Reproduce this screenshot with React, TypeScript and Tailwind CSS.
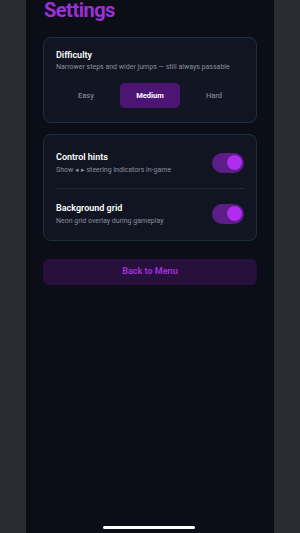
import React from "react";

function Toggle() {
  return (
    <div className="w-[32px] h-[20px] rounded-full bg-[#5b1d86] flex items-center justify-end px-[2px] shrink-0">
      <div className="w-[15px] h-[15px] rounded-full bg-[#b12bf0]" />
    </div>
  );
}

export default function App() {
  return (
    <div className="w-[300px] h-[533px] bg-[#2a2c31] flex justify-center overflow-hidden" style={{ fontFamily: "Roboto, 'Noto Sans', sans-serif" }}>
      <div className="w-[248px] h-full bg-[#0b0e17] flex flex-col px-[17px] relative">
        <h1 className="text-[20px] font-bold tracking-tight text-[#9d2fd6] leading-none mt-0 ml-[1px] h-[20px]">Settings</h1>

        <div className="mt-[17px] rounded-[8px] border border-[#1e2f3c] bg-[#111522] px-[12px] pt-[10px] pb-[14px]">
          <div className="text-[9px] font-semibold text-white leading-[14px]">Difficulty</div>
          <div className="text-[7px] text-[#8a8f9c] leading-[10px]">Narrower steps and wider jumps — still always passable</div>
          <div className="mt-[11px] grid grid-cols-3 gap-[4px] rounded-[6px] bg-[#121624]">
            <div className="h-[25px] flex items-center justify-center text-[7.5px] text-[#7d8290] font-medium">Easy</div>
            <div className="h-[25px] flex items-center justify-center text-[7.5px] text-white font-bold rounded-[5px] bg-[#4c1574]">Medium</div>
            <div className="h-[25px] flex items-center justify-center text-[7.5px] text-[#7d8290] font-medium">Hard</div>
          </div>
        </div>

        <div className="mt-[11px] rounded-[8px] border border-[#1e2f3c] bg-[#111522] px-[12px]">
          <div className="flex items-center justify-between pt-[15px] pb-[13px]">
            <div>
              <div className="text-[9px] font-semibold text-white leading-[14px]">Control hints</div>
              <div className="text-[7px] text-[#8a8f9c] leading-[10px] mt-[1px]">Show ◂ ▸ steering indicators in-game</div>
            </div>
            <Toggle />
          </div>
          <div className="h-px bg-[#232a36]" />
          <div className="flex items-center justify-between pt-[12px] pb-[14px]">
            <div>
              <div className="text-[9px] font-semibold text-white leading-[14px]">Background grid</div>
              <div className="text-[7px] text-[#8a8f9c] leading-[10px] mt-[1px]">Neon grid overlay during gameplay</div>
            </div>
            <Toggle />
          </div>
        </div>

        <button className="mt-[18px] h-[26px] rounded-[6px] bg-[#28103c] text-[#9d2fd6] text-[9px] font-bold flex items-center justify-center">
          Back to Menu
        </button>

        <div className="absolute bottom-[4px] left-[77px] w-[92px] h-[3px] bg-white rounded-full" />
      </div>
    </div>
  );
}
